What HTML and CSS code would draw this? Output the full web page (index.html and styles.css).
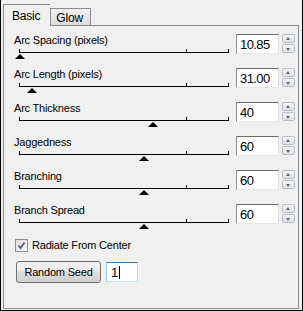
FILE: index.html
```html
<!DOCTYPE html>
<html>
<head>
  <title>Lightning Settings</title>
  <link rel="stylesheet" href="styles.css">
</head>
<body>
  <div class="window">
    <div class="tabs">
      <div class="tab active">Basic</div>
      <div class="tab">Glow</div>
    </div>

    <div class="panel">
      <div class="row">
        <div class="slider-col">
          <div class="label">Arc Spacing (pixels)</div>
          <div class="track"><span class="thumb" style="left: 1px"></span></div>
        </div>
        <div class="num">10.85</div>
        <div class="spin"><span class="up"></span><span class="down"></span></div>
      </div>

      <div class="row">
        <div class="slider-col">
          <div class="label">Arc Length (pixels)</div>
          <div class="track"><span class="thumb" style="left: 13px"></span></div>
        </div>
        <div class="num">31.00</div>
        <div class="spin"><span class="up"></span><span class="down"></span></div>
      </div>

      <div class="row">
        <div class="slider-col">
          <div class="label">Arc Thickness</div>
          <div class="track"><span class="thumb" style="left: 134px"></span></div>
        </div>
        <div class="num">40</div>
        <div class="spin"><span class="up"></span><span class="down"></span></div>
      </div>

      <div class="row">
        <div class="slider-col">
          <div class="label">Jaggedness</div>
          <div class="track"><span class="thumb" style="left: 125px"></span></div>
        </div>
        <div class="num">60</div>
        <div class="spin"><span class="up"></span><span class="down"></span></div>
      </div>

      <div class="row">
        <div class="slider-col">
          <div class="label">Branching</div>
          <div class="track"><span class="thumb" style="left: 125px"></span></div>
        </div>
        <div class="num">60</div>
        <div class="spin"><span class="up"></span><span class="down"></span></div>
      </div>

      <div class="row">
        <div class="slider-col">
          <div class="label">Branch Spread</div>
          <div class="track"><span class="thumb" style="left: 125px"></span></div>
        </div>
        <div class="num">60</div>
        <div class="spin"><span class="up"></span><span class="down"></span></div>
      </div>

      <div class="check-row">
        <span class="checkbox">
          <svg width="9" height="9" viewBox="0 0 9 9"><polyline points="1.5,4.5 3.5,7 7.5,1.5" fill="none" stroke="#4b5e8e" stroke-width="1.8"/></svg>
        </span>
        <span class="check-label">Radiate From Center</span>
      </div>

      <div class="seed-row">
        <button class="btn">Random Seed</button>
        <div class="seed-box">1<span class="caret"></span></div>
      </div>
    </div>
  </div>
</body>
</html>
```

FILE: styles.css
```css
body {
  margin: 0;
  font-family: "Liberation Sans", Arial, sans-serif;
  font-size: 11px;
  letter-spacing: -0.2px;
  color: #000;
  background-color: #f0f0f0;
}

.window {
  width: 301px;
  height: 310px;
  border: 1px solid #000;
  border-top: 0;
  background-color: #f0f0f0;
}

/* tab strip */

.tabs {
  display: flex;
  align-items: flex-end;
  height: 21px;
  padding: 4px 0 0 2px;
}

.tab {
  box-sizing: border-box;
  height: 17px;
  padding: 2px 7px 0 5px;
  border: 1px solid #898c95;
  border-bottom: 0;
  background: linear-gradient(#f2f2f2, #dcdcdc);
  font-size: 12px;
  line-height: 14px;
}

.tab.active {
  position: relative;
  z-index: 1;
  height: 22px;
  margin-bottom: -1px;
  padding: 4px 10px 0 8px;
  border-right: 0;
  background: #f0f0f0;
}

/* tab page */

.panel {
  box-sizing: border-box;
  width: 296px;
  height: 284px;
  margin-left: 2px;
  padding: 8px 0 0 10px;
  border: 1px solid #898c95;
}

.row {
  display: flex;
  height: 34px;
}

.slider-col {
  width: 222px;
}

.label {
  line-height: 13px;
}

.track {
  position: relative;
  width: 210px;
  height: 3px;
  margin: 2px 0 0 5px;
  border-bottom: 1px solid #000;
}

.track::before,
.track::after {
  content: "";
  position: absolute;
  bottom: 0;
  width: 1px;
  height: 3px;
  background-color: #000;
}

.track::before {
  left: 0;
  box-shadow: 167px 0 0 #000;
}

.track::after {
  right: 0;
}

.thumb {
  position: absolute;
  top: 5px;
  width: 0;
  height: 0;
  margin-left: -5px;
  border-left: 5px solid transparent;
  border-right: 5px solid transparent;
  border-bottom: 5px solid #000;
}

.num {
  box-sizing: border-box;
  width: 43px;
  height: 20px;
  padding: 3px 0 0 3px;
  border: 1px solid;
  border-color: #6d6d6d #e0e0e0 #e6e6e6 #8e8e8e;
  background-color: #fff;
  font-size: 13px;
  letter-spacing: -0.6px;
  line-height: 14px;
}

.spin {
  display: flex;
  flex-direction: column;
  gap: 1px;
  width: 13px;
  height: 19px;
  margin-left: 3px;
}

.spin span {
  position: relative;
  flex: 1;
  border: 1px solid #b9bdc4;
  border-radius: 2px;
  background: linear-gradient(#f5f6f8, #dfe2e7);
}

.spin span::after {
  content: "";
  position: absolute;
  left: 3px;
  top: 2px;
  border-left: 2.5px solid transparent;
  border-right: 2.5px solid transparent;
}

.spin .up::after {
  border-bottom: 3px solid #5d6673;
}

.spin .down::after {
  top: 3px;
  border-top: 3px solid #5d6673;
}

/* checkbox and seed */

.check-row {
  display: flex;
  align-items: center;
  gap: 4px;
  height: 15px;
  margin: 0 0 0 1px;
}

.checkbox {
  box-sizing: border-box;
  display: flex;
  align-items: center;
  justify-content: center;
  width: 13px;
  height: 13px;
  border: 1px solid #8e8f8f;
  background: linear-gradient(135deg, #dcdcdc, #fbfbfb);
}

.check-label {
  line-height: 13px;
}

.seed-row {
  display: flex;
  align-items: center;
  gap: 5px;
  margin: 8px 0 0 2px;
}

.btn {
  box-sizing: border-box;
  width: 85px;
  height: 22px;
  padding: 0;
  border: 1px solid #707070;
  border-radius: 3px;
  background: linear-gradient(#f2f2f2 0%, #ebebeb 45%, #dddddd 50%, #cfcfcf 100%);
  font-family: inherit;
  font-size: 11px;
  letter-spacing: -0.2px;
  color: #000;
}

.seed-box {
  box-sizing: border-box;
  display: flex;
  align-items: center;
  width: 32px;
  height: 20px;
  padding-left: 4px;
  border: 1px solid;
  border-color: #3d7bad #b7d9ed #c7e2f1 #a4c9e3;
  background-color: #fff;
  font-size: 13px;
}

.caret {
  display: inline-block;
  width: 1px;
  height: 13px;
  margin-left: 1px;
  background-color: #000;
}
```
